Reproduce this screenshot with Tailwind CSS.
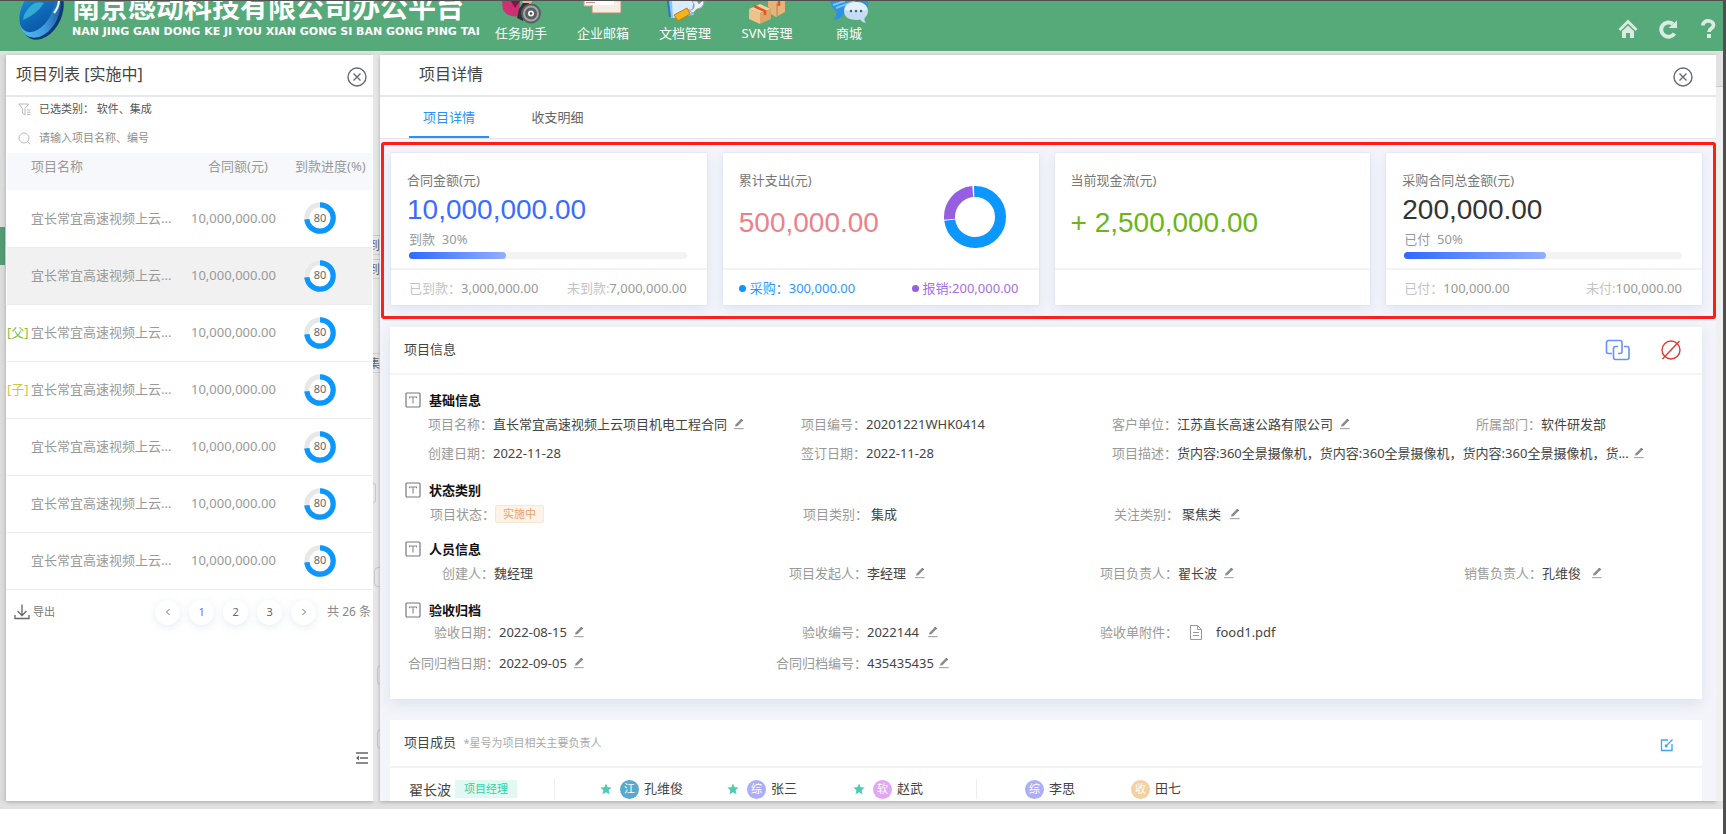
<!DOCTYPE html>
<html lang="zh-CN">
<head>
<meta charset="utf-8">
<title>项目详情</title>
<script src="https://cdn.jsdelivr.net/npm/@tailwindcss/browser@4"></script>
</head>
<body class="flex h-screen flex-col overflow-hidden border-t border-r-3 border-[#4f4f4f] bg-white font-['Noto_Sans','Noto_Sans_CJK_SC',sans-serif] text-[13px] text-[#444]">
<svg class="hidden" aria-hidden="true">
  <symbol id="pen" viewBox="0 0 12 12"><path d="M2 8.6 2.6 6.4 7.8 1.2 9.8 2.8 4.4 8.2Z" fill="#8c8c8c"/><path d="M7.8 1.2 9.8 2.8" stroke="#777" stroke-width="1.2"/><path d="M1 10.6h9.6" stroke="#aaa" stroke-width="1.2"/></symbol>
  <symbol id="tbox" viewBox="0 0 16 16"><rect x="1" y="1" width="14" height="14" rx="1" fill="none" stroke="#777" stroke-width="1.2"/><path d="M4.500 6.200V5h7v1.200M8 5v6.500" fill="none" stroke="#888" stroke-width="1.1"/></symbol>
  <symbol id="close" viewBox="0 0 20 20"><circle cx="10" cy="10" r="9" fill="none" stroke="#666a75" stroke-width="1.4"/><path d="m6.500 6.500 7 7m0-7-7 7" stroke="#666a75" stroke-width="1.4"/></symbol>
  <symbol id="star" viewBox="0 0 12 12"><path d="M6 .6 7.6 4.3 11.6 4.6 8.6 7.3 9.5 11.3 6 9.2 2.500 11.3 3.4 7.3.4 4.6 4.4 4.3Z" fill="#4ccbb0"/></symbol>
  <symbol id="ring" viewBox="0 0 32 32"><circle cx="16" cy="16" r="13.2" fill="none" stroke="#e8e8e8" stroke-width="5"/><circle cx="16" cy="16" r="13.2" fill="none" stroke="#0c97ff" stroke-width="5.2" pathLength="100" stroke-dasharray="73.5 100" transform="rotate(-90 16 16)"/></symbol>
</svg>

<header class="flex h-[50px] shrink-0 items-start justify-between overflow-hidden bg-[#56a978] text-white">
  <div class="flex items-start">
    <svg class="ml-[18px] h-10 w-[48px]" viewBox="0 0 48 40" aria-hidden="true">
      <defs><linearGradient id="g1" x1="0" y1="0" x2="1" y2="1"><stop offset="0" stop-color="#1aa0dc"/><stop offset=".5" stop-color="#0f6fbe"/><stop offset="1" stop-color="#0a4f9e"/></linearGradient>
      <linearGradient id="g2" x1="0" y1="1" x2="1" y2="0"><stop offset="0" stop-color="#5fc3ee"/><stop offset=".5" stop-color="#3d9fe0"/><stop offset="1" stop-color="#0b3f84"/></linearGradient></defs>
      <ellipse cx="24" cy="11" rx="20" ry="29" transform="rotate(24 24 11)" fill="#0c3a77"/>
      <ellipse cx="22" cy="10" rx="19" ry="28" transform="rotate(24 22 10)" fill="url(#g2)"/>
      <ellipse cx="19" cy="8" rx="15" ry="25" transform="rotate(28 19 8)" fill="url(#g1)"/>
      <path d="M6 14Q14-2 26 2 18 14 5 19Z" fill="#42c3dc" opacity=".7"/>
      <path d="M36 12Q41 6 41-2" stroke="#e5f5ff" stroke-width="2.200" fill="none"/>
    </svg>
    <div class="-mt-[11px] ml-[6px] w-[408px]">
      <h1 class="text-[28px] leading-[34px] font-bold whitespace-nowrap">南京感动科技有限公司办公平台</h1>
      <p class="font-['DejaVu_Sans'] text-[11px] leading-4 font-bold whitespace-nowrap">NAN JING GAN DONG KE JI YOU XIAN GONG SI BAN GONG PING TAI</p>
    </div>
    <nav class="flex">
      <a href="#" class="flex w-[82px] flex-col items-center"><svg class="h-[23px] w-[42px]" viewBox="0 0 42 23" aria-hidden="true"><path d="M2 0h18l-1 15Q8 17 3 9Z" fill="#cf2f73"/><path d="M11 0h9l-5 7Z" fill="#7d1747"/><path d="M22 0h10l-1 4h-7Z" fill="#f2b48c"/><path d="M19 8 23 2h6l-6 18-6-3Z" fill="#2f3336"/><circle cx="31" cy="12.500" r="10" fill="#5b5e61"/><circle cx="31" cy="12.500" r="7" fill="none" stroke="#a5a8aa" stroke-width="2"/><circle cx="31" cy="12.500" r="3" fill="#f4f4f4"/><circle cx="31" cy="12.500" r="1.200" fill="#444"/></svg><span class="leading-[18px]">任务助手</span></a>
      <a href="#" class="flex w-[82px] flex-col items-center"><svg class="h-[23px] w-[42px]" viewBox="0 0 42 23" aria-hidden="true"><path d="M2 0h33v5H2Z" fill="#fbf8f3" stroke="#c8a488"/><path d="M10 2v10h29V0" fill="#f5ece2" stroke="#b98f70"/><path d="M3 0h29v4H3Z" fill="#fff"/><path d="M4 1.500h9" stroke="#d88"/></svg><span class="leading-[18px]">企业邮箱</span></a>
      <a href="#" class="flex w-[82px] flex-col items-center"><svg class="h-[23px] w-[42px]" viewBox="0 0 42 23" aria-hidden="true"><path d="M4 0h24l2 14-23 3Z" fill="#8cc3f5"/><path d="M8 0h22l-3 12-18 5Z" fill="#d9ecfb"/><path d="M4 0l2 16" stroke="#2775c5" stroke-width="2"/><path d="M24 9Q31 10 30 3L28 0h5l2 3 3-3h2q0 7-7 8l-4 4Z" fill="#eef1f4" stroke="#98a4b0"/><path d="m10 14 13-7 3 6-12 7Z" fill="#f6b21c" stroke="#c47d08"/></svg><span class="leading-[18px]">文档管理</span></a>
      <a href="#" class="flex w-[82px] flex-col items-center"><svg class="h-[23px] w-[42px]" viewBox="0 0 42 23" aria-hidden="true"><path d="M3 8 14 3l11 5-11 4Z" fill="#f5cf9e"/><path d="M3 8v10l11 5V12Z" fill="#efc28b"/><path d="M14 12 25 8v10l-11 5Z" fill="#dda668"/><path d="M22 0h17v11l-9 5-5-3V8l-3-2Z" fill="#e6b47a"/><path d="M31 2v13" stroke="#b97f45"/><path d="m8 5 11 5v4M33 0v5" stroke="#e8541f" stroke-width="2.500" fill="none"/></svg><span class="leading-[18px]">SVN管理</span></a>
      <a href="#" class="flex w-[82px] flex-col items-center"><svg class="h-[23px] w-[42px]" viewBox="0 0 42 23" aria-hidden="true"><path d="M2 0h38v8L16 12Q14 18 5 19 10 14 8 10 3 6 2 0Z" fill="#2b92e6"/><path d="m5 4 12-4m-9 7L27 0" stroke="#7cc4f8" stroke-width="2"/><path d="M28 1C19 1 16 5 16 10s4 9 12 9q2 0 4-.5 2 3 6 3.500-2-2-1.500-5 3.500-3 3.500-7C40 5 36 1 28 1Z" fill="#c4dcf4"/><path d="M28 1C20 1 17 5 17 9q10 3 22 0C39 4 35 1 28 1Z" fill="#e4f0fb"/><circle cx="23" cy="10" r="1.300" fill="#44617f"/><circle cx="28" cy="10" r="1.300" fill="#44617f"/><circle cx="33" cy="10" r="1.300" fill="#44617f"/></svg><span class="leading-[18px]">商城</span></a>
    </nav>
  </div>
  <div class="flex gap-5 pt-[18px] pr-[5px]">
    <button aria-label="首页"><svg class="size-5" viewBox="0 0 20 20"><path d="m1.500 11 8.500-8.500 8.500 8.500" fill="none" stroke="#dcebe2" stroke-width="2.800"/><path d="M4 12.200 10 6.500l6 5.700V19h-4v-5H8v5H4Z" fill="#dcebe2"/></svg></button>
    <button aria-label="刷新"><svg class="size-5" viewBox="0 0 20 20"><path d="M16.500 14.500A7.200 7.200 0 1 1 15 5" fill="none" stroke="#dcebe2" stroke-width="4"/><path d="M10.500 9H19V1.500Z" fill="#dcebe2"/></svg></button>
    <button aria-label="帮助"><svg class="size-5" viewBox="0 0 20 20"><path d="M5 6.500C5 0 15.500 1 15.500 6c0 3.500-4.500 3.500-4.500 7" fill="none" stroke="#dcebe2" stroke-width="3.800"/><path d="M9 15h4v4H9Z" fill="#dcebe2"/></svg></button>
  </div>
</header>

<div class="mb-[25px] flex min-h-0 flex-1 bg-[#e1e1e1] pt-1 pb-2">
  <div class="w-[6px] shrink-0 bg-[#dcdcdc] pt-[172px]"><div class="h-[38px] w-[5px] bg-[#559c72]"></div></div>

  <aside class="flex w-[367px] shrink-0 flex-col bg-white shadow-[0_1px_4px_#0004]">
    <div class="flex h-[42px] shrink-0 items-center justify-between border-b-2 border-[#e6e8ef] pr-[6px] pl-[10px]">
      <h2 class="pb-[2px] text-[16px] text-[#444]">项目列表 [实施中]</h2>
      <button aria-label="关闭列表" class="mt-1"><svg class="size-5"><use href="#close"/></svg></button>
    </div>
    <button class="flex h-6 shrink-0 items-center gap-2 pl-[12px] text-left text-[11px] text-[#555]">
      <svg class="size-[13px]" viewBox="0 0 13 13" fill="none" stroke="#bbb"><path d="M.8 1h9.800L7 5.500V12L4.500 10V5.500ZM9 7h3.500M9 9.200h3.500M9 11.400h3.500"/></svg>
      <span>已选类别： 软件、集成</span>
    </button>
    <label class="mt-2 mb-[5px] flex h-[19px] shrink-0 items-center gap-2 pl-[12px]">
      <svg class="size-[13px] shrink-0" viewBox="0 0 13 13" fill="none" stroke="#bbb"><circle cx="6" cy="6" r="5"/><path d="m9.700 9.700 2.500 2.500"/></svg>
      <input aria-label="搜索项目" class="w-full text-[11px] outline-none placeholder:text-[#8f8f8f]" placeholder="请输入项目名称、编号">
    </label>
    <table class="mx-px table-fixed text-[13px] text-[#999]">
      <colgroup><col class="w-6"><col class="w-[160px]"><col class="w-[104px]"><col></colgroup>
      <thead><tr class="h-[37px] bg-[#f7f8fc] text-left align-top"><th></th><th class="pt-1 font-normal">项目名称</th><th class="pt-1 pl-[17px] font-normal">合同额(元)</th><th class="pt-1 font-normal whitespace-nowrap">到款进度(%)</th></tr></thead>
      <tbody>
        <tr class="h-[57px] border-b border-[#ececec]"><td></td><td>宜长常宜高速视频上云...</td><td>10,000,000.00</td><td class="pl-[9px]"><div class="grid size-8 place-items-center text-[11px] text-[#666]"><svg class="col-start-1 row-start-1 size-8"><use href="#ring"/></svg><span class="col-start-1 row-start-1">80</span></div></td></tr>
        <tr class="h-[57px] border-b border-[#ececec] bg-[#f1f1f1]"><td></td><td>宜长常宜高速视频上云...</td><td>10,000,000.00</td><td class="pl-[9px]"><div class="grid size-8 place-items-center rounded-full bg-white text-[11px] text-[#666]"><svg class="col-start-1 row-start-1 size-8"><use href="#ring"/></svg><span class="col-start-1 row-start-1">80</span></div></td></tr>
        <tr class="h-[57px] border-b border-[#ececec]"><td class="whitespace-nowrap text-[#7fc241]">[父]</td><td>宜长常宜高速视频上云...</td><td>10,000,000.00</td><td class="pl-[9px]"><div class="grid size-8 place-items-center text-[11px] text-[#666]"><svg class="col-start-1 row-start-1 size-8"><use href="#ring"/></svg><span class="col-start-1 row-start-1">80</span></div></td></tr>
        <tr class="h-[57px] border-b border-[#ececec]"><td class="whitespace-nowrap text-[#cfc63a]">[子]</td><td>宜长常宜高速视频上云...</td><td>10,000,000.00</td><td class="pl-[9px]"><div class="grid size-8 place-items-center text-[11px] text-[#666]"><svg class="col-start-1 row-start-1 size-8"><use href="#ring"/></svg><span class="col-start-1 row-start-1">80</span></div></td></tr>
        <tr class="h-[57px] border-b border-[#ececec]"><td></td><td>宜长常宜高速视频上云...</td><td>10,000,000.00</td><td class="pl-[9px]"><div class="grid size-8 place-items-center text-[11px] text-[#666]"><svg class="col-start-1 row-start-1 size-8"><use href="#ring"/></svg><span class="col-start-1 row-start-1">80</span></div></td></tr>
        <tr class="h-[57px] border-b border-[#ececec]"><td></td><td>宜长常宜高速视频上云...</td><td>10,000,000.00</td><td class="pl-[9px]"><div class="grid size-8 place-items-center text-[11px] text-[#666]"><svg class="col-start-1 row-start-1 size-8"><use href="#ring"/></svg><span class="col-start-1 row-start-1">80</span></div></td></tr>
        <tr class="h-[57px] border-b border-[#ececec]"><td></td><td>宜长常宜高速视频上云...</td><td>10,000,000.00</td><td class="pl-[9px]"><div class="grid size-8 place-items-center text-[11px] text-[#666]"><svg class="col-start-1 row-start-1 size-8"><use href="#ring"/></svg><span class="col-start-1 row-start-1">80</span></div></td></tr>
      </tbody>
    </table>
    <div class="mt-[10px] flex items-center justify-between pr-[2px] pl-2 text-[11px] text-[#777]">
      <button class="flex items-center gap-[3px]"><svg class="size-4" viewBox="0 0 16 16" fill="none" stroke="#666" stroke-width="1.300"><path d="M8 .5v11M3.500 7 8 11.500 12.500 7M1 11v3.500h14V11"/></svg>导出</button>
      <div class="flex items-center gap-[9px]">
        <button aria-label="上一页" class="grid size-[25px] place-items-center rounded-full shadow-[0_2px_8px_#a9bfd24d]"><svg class="size-2" viewBox="0 0 8 8" fill="none" stroke="#777"><path d="M5.500 1 2.500 4l3 3"/></svg></button>
        <button class="size-[25px] rounded-full text-[#6a6aff] shadow-[0_2px_8px_#a9bfd24d]">1</button>
        <button class="size-[25px] rounded-full text-[#666] shadow-[0_2px_8px_#a9bfd24d]">2</button>
        <button class="size-[25px] rounded-full text-[#666] shadow-[0_2px_8px_#a9bfd24d]">3</button>
        <button aria-label="下一页" class="grid size-[25px] place-items-center rounded-full shadow-[0_2px_8px_#a9bfd24d]"><svg class="size-2" viewBox="0 0 8 8" fill="none" stroke="#777"><path d="m2.500 1 3 3-3 3"/></svg></button>
        <span class="ml-[2px] text-[12px] text-[#888]">共 26 条</span>
      </div>
    </div>
    <button aria-label="收起" class="mt-auto mr-1 mb-[36px] self-end"><svg class="size-[14px]" viewBox="0 0 14 14" fill="none" stroke="#666" stroke-width="1.300"><path d="M1 2h12M5 7h8M1 12h12"/><path d="M4 4.500v5L1 7Z" fill="#666" stroke="none"/></svg></button>
  </aside>

  <div class="flex w-[7px] shrink-0 flex-col gap-1 overflow-hidden bg-[#e6e6e6] pt-[180px] text-[12px] leading-5 text-[#666]" aria-hidden="true">
    <span class="-ml-[5px] h-5 w-4 border-y border-[#ccc]">到</span><span class="-ml-[5px] h-5 w-4 border-y border-[#ccc]">到</span>
    <span class="mt-[70px] -ml-[5px] h-5 w-4 border-y border-[#ccc]">集</span>
    <span class="mt-[106px] h-5 w-[3px] rounded-r border border-l-0 border-[#c8c8c8]"></span>
    <span class="mt-[60px] ml-px h-5 w-4 rounded border border-[#c8c8c8]"></span>
    <span class="mt-[74px] ml-1 h-5 w-4 rounded border border-[#c8c8c8]"></span>
    <span class="mt-[40px] ml-1 h-5 w-4 rounded border border-[#c8c8c8]"></span>
  </div>

  <main class="flex min-w-0 flex-1 flex-col overflow-hidden bg-[#f4f5fa] shadow-[0_1px_4px_#0004]">
    <div class="flex h-[42px] shrink-0 items-center justify-between border-b-2 border-[#e6e8ef] bg-white pr-[23px] pl-[39px]">
      <h2 class="pb-[2px] text-[16px] text-[#444]">项目详情</h2>
      <button aria-label="关闭详情" class="mt-1"><svg class="size-5"><use href="#close"/></svg></button>
    </div>
    <div role="tablist" class="flex h-[42px] shrink-0 gap-[29px] border-b border-[#e4e5ea] bg-white pl-[29px]">
      <button role="tab" aria-selected="true" class="w-[80px] border-b-2 border-[#2492f7] pt-[2px] text-[#2492f7]">项目详情</button>
      <button role="tab" aria-selected="false" class="w-[79px] text-[#666]">收支明细</button>
    </div>

    <section class="mt-[3px] ml-px grid shrink-0 grid-cols-4 gap-4 rounded-[3px] border-3 border-[#ff1e14] pt-2 pr-[11px] pb-[11px] pl-[7px] text-[#999]">
      <article class="h-[152px] bg-white shadow-[0_4px_12px_#b9cbe566,0_0_1px_#b9cbe5]">
        <div class="flex h-[117px] flex-col border-b-2 border-[#f3f3f5] px-4 pt-[17px]">
          <h3 class="leading-5 text-[#777]">合同金额(元)</h3>
          <p class="font-['Liberation_Sans'] text-[28px] leading-[39px] text-[#3b6cff]">10,000,000.00</p>
          <p class="pl-[2px] leading-5 whitespace-pre">到款  30%</p>
          <div class="mt-[3px] mr-1 ml-[2px] h-[7px] rounded-full bg-[#f3f3f3]"><div class="h-full rounded-full bg-linear-to-r from-[#2e69ff] to-[#93aeff]" style="width:35%"></div></div>
        </div>
        <div class="flex h-[37px] items-center justify-between pr-5 pl-[18px]"><span><span class="text-[#c4c4c4]">已到款：</span>3,000,000.00</span><span><span class="text-[#c4c4c4]">未到款:</span>7,000,000.00</span></div>
      </article>
      <article class="h-[152px] bg-white shadow-[0_4px_12px_#b9cbe566,0_0_1px_#b9cbe5]">
        <div class="flex h-[117px] justify-between border-b-2 border-[#f3f3f5] pt-[17px] pr-[32px] pl-4">
          <div><h3 class="leading-5 text-[#777]">累计支出(元)</h3>
          <p class="mt-[14px] font-['Liberation_Sans'] text-[28px] leading-[38px] text-[#ef7f8a]">500,000.00</p></div>
          <svg class="mt-[15px] size-[64px]" viewBox="0 0 64 64" fill="none" stroke-width="11" aria-label="支出构成"><circle cx="32" cy="32" r="25.500" stroke="#0c97ff" pathLength="100" stroke-dasharray="73.500 100" transform="rotate(-92 32 32)"/><circle cx="32" cy="32" r="25.500" stroke="#965fe2" pathLength="100" stroke-dasharray="25 100" transform="rotate(175 32 32)"/></svg>
        </div>
        <div class="flex h-[37px] items-center justify-between pr-5 pl-4"><span class="flex items-center gap-1 text-[#2b98f5]"><i class="size-[7px] rounded-full bg-[#0c97ff]"></i>采购：300,000.00</span><span class="flex items-center gap-1 text-[#a36fe4]"><i class="size-[7px] rounded-full bg-[#965fe2]"></i>报销:200,000.00</span></div>
      </article>
      <article class="h-[152px] bg-white shadow-[0_4px_12px_#b9cbe566,0_0_1px_#b9cbe5]">
        <div class="h-[117px] border-b-2 border-[#f3f3f5] px-4 pt-[17px]">
          <h3 class="leading-5 text-[#777]">当前现金流(元)</h3>
          <p class="mt-[14px] font-['Liberation_Sans'] text-[28px] leading-[38px] text-[#6cb516]">+ 2,500,000.00</p>
        </div>
      </article>
      <article class="h-[152px] bg-white shadow-[0_4px_12px_#b9cbe566,0_0_1px_#b9cbe5]">
        <div class="flex h-[117px] flex-col border-b-2 border-[#f3f3f5] px-4 pt-[17px]">
          <h3 class="leading-5 text-[#777]">采购合同总金额(元)</h3>
          <p class="font-['Liberation_Sans'] text-[28px] leading-[39px] text-[#333]">200,000.00</p>
          <p class="pl-[2px] leading-5 whitespace-pre">已付  50%</p>
          <div class="mt-[3px] mr-1 ml-[2px] h-[7px] rounded-full bg-[#f3f3f3]"><div class="h-full rounded-full bg-linear-to-r from-[#2e69ff] to-[#93aeff]" style="width:51%"></div></div>
        </div>
        <div class="flex h-[37px] items-center justify-between pr-5 pl-[18px]"><span><span class="text-[#c4c4c4]">已付：</span>100,000.00</span><span><span class="text-[#c4c4c4]">未付:</span>100,000.00</span></div>
      </article>
    </section>

    <section class="mt-2 mr-[14px] ml-[10px] shrink-0 bg-white pb-6 shadow-[0_5px_14px_#b9c3dc66]">
      <div class="flex h-12 items-center justify-between border-b-2 border-[#f5f5f7] pr-[20px] pl-[14px]">
        <h3>项目信息</h3>
        <div class="flex gap-[29px]">
          <button aria-label="复制"><svg class="h-[22px] w-[26px]" viewBox="0 0 26 22" fill="none" stroke="#6492ff" stroke-width="1.600"><path d="M7 14.500H3.500a2 2 0 0 1-2-2v-9a2 2 0 0 1 2-2H15a2 2 0 0 1 2 2v9a2 2 0 0 1-2 2h-2"/><path d="M13 7.500h-2.500a2 2 0 0 0-2 2v9a2 2 0 0 0 2 2H22a2 2 0 0 0 2-2v-9a2 2 0 0 0-2-2h-3"/></svg></button>
          <button aria-label="停用"><svg class="size-[22px]" viewBox="0 0 22 22" fill="none" stroke="#e23b2e" stroke-width="1.400"><circle cx="11" cy="11" r="9"/><path d="M2.500 20 19.500 2"/></svg></button>
        </div>
      </div>
      <div class="pt-[13px] leading-6 whitespace-nowrap">
        <h4 class="flex h-6 items-center gap-2 pl-[15px] font-bold text-[#111]"><svg class="size-4"><use href="#tbox"/></svg>基础信息</h4>
        <dl class="grid grid-cols-[373fr_311fr_364fr_264fr] gap-y-[5px]">
          <div class="flex items-center"><dt class="w-[103px] text-right text-[#999]">项目名称：</dt><dd class="flex items-center gap-[6px]">直长常宜高速视频上云项目机电工程合同<button aria-label="编辑项目名称"><svg class="size-3"><use href="#pen"/></svg></button></dd></div>
          <div class="flex items-center"><dt class="w-[103px] text-right text-[#999]">项目编号：</dt><dd>20201221WHK0414</dd></div>
          <div class="flex items-center"><dt class="w-[103px] text-right text-[#999]">客户单位：</dt><dd class="flex items-center gap-[6px]">江苏直长高速公路有限公司<button aria-label="编辑客户单位"><svg class="size-3"><use href="#pen"/></svg></button></dd></div>
          <div class="flex items-center"><dt class="w-[103px] text-right text-[#999]">所属部门：</dt><dd>软件研发部</dd></div>
          <div class="flex items-center"><dt class="w-[103px] text-right text-[#999]">创建日期：</dt><dd>2022-11-28</dd></div>
          <div class="flex items-center"><dt class="w-[103px] text-right text-[#999]">签订日期：</dt><dd>2022-11-28</dd></div>
          <div class="col-span-2 flex items-center"><dt class="w-[103px] text-right text-[#999]">项目描述：</dt><dd class="flex items-center gap-1">货内容:360全景摄像机，货内容:360全景摄像机，货内容:360全景摄像机，货...<button aria-label="编辑项目描述"><svg class="size-3"><use href="#pen"/></svg></button></dd></div>
        </dl>
        <h4 class="mt-[13px] flex h-6 items-center gap-2 pl-[15px] font-bold text-[#111]"><svg class="size-4"><use href="#tbox"/></svg>状态类别</h4>
        <dl class="grid grid-cols-[373fr_311fr_364fr_264fr]">
          <div class="flex items-center"><dt class="w-[105px] text-right text-[#999]">项目状态：</dt><dd class="flex"><span class="h-[18px] rounded-xs border border-[#fce6d2] bg-[#fdf3e9] px-[7px] text-[11px] leading-4 text-[#eda35f]">实施中</span></dd></div>
          <div class="flex items-center gap-[3px]"><dt class="w-[105px] text-right text-[#999]">项目类别：</dt><dd>集成</dd></div>
          <div class="flex items-center gap-[3px]"><dt class="w-[105px] text-right text-[#999]">关注类别：</dt><dd class="flex items-center gap-2">聚焦类<button aria-label="编辑关注类别"><svg class="size-3"><use href="#pen"/></svg></button></dd></div>
        </dl>
        <h4 class="mt-[11px] flex h-6 items-center gap-2 pl-[15px] font-bold text-[#111]"><svg class="size-4"><use href="#tbox"/></svg>人员信息</h4>
        <dl class="grid grid-cols-[373fr_311fr_364fr_264fr]">
          <div class="flex items-center"><dt class="w-[104px] text-right text-[#999]">创建人：</dt><dd>魏经理</dd></div>
          <div class="flex items-center"><dt class="w-[104px] text-right text-[#999]">项目发起人：</dt><dd class="flex items-center gap-2">李经理<button aria-label="编辑项目发起人"><svg class="size-3"><use href="#pen"/></svg></button></dd></div>
          <div class="flex items-center"><dt class="w-[104px] text-right text-[#999]">项目负责人：</dt><dd class="flex items-center gap-[6px]">翟长波<button aria-label="编辑项目负责人"><svg class="size-3"><use href="#pen"/></svg></button></dd></div>
          <div class="flex items-center"><dt class="w-[104px] text-right text-[#999]">销售负责人：</dt><dd class="flex items-center gap-[10px]">孔维俊<button aria-label="编辑销售负责人"><svg class="size-3"><use href="#pen"/></svg></button></dd></div>
        </dl>
        <h4 class="mt-[13px] flex h-6 items-center gap-2 pl-[15px] font-bold text-[#111]"><svg class="size-4"><use href="#tbox"/></svg>验收归档</h4>
        <dl class="-mt-[2px] grid grid-cols-[373fr_311fr_364fr_264fr] gap-y-[7px]">
          <div class="flex items-center"><dt class="w-[109px] text-right text-[#999]">验收日期：</dt><dd class="flex items-center gap-[6px]">2022-08-15<button aria-label="编辑验收日期"><svg class="size-3"><use href="#pen"/></svg></button></dd></div>
          <div class="flex items-center"><dt class="w-[104px] text-right text-[#999]">验收编号：</dt><dd class="flex items-center gap-2">2022144<button aria-label="编辑验收编号"><svg class="size-3"><use href="#pen"/></svg></button></dd></div>
          <div class="flex items-center"><dt class="w-[104px] text-right text-[#999]">验收单附件：</dt><dd><a href="#" class="flex items-center gap-[14px] pl-3"><svg class="h-[15px] w-3" viewBox="0 0 12 15" fill="none" stroke="#999"><path d="M.5.500h7l4 4v10H.500ZM7.500.500v4h4M3 7.500h6M3 10.500h6"/></svg>food1.pdf</a></dd></div>
          <div></div>
          <div class="flex items-center"><dt class="w-[109px] text-right text-[#999]">合同归档日期：</dt><dd class="flex items-center gap-[6px]">2022-09-05<button aria-label="编辑合同归档日期"><svg class="size-3"><use href="#pen"/></svg></button></dd></div>
          <div class="flex items-center"><dt class="w-[104px] text-right text-[#999]">合同归档编号：</dt><dd class="flex items-center gap-1">435435435<button aria-label="编辑合同归档编号"><svg class="size-3"><use href="#pen"/></svg></button></dd></div>
        </dl>
      </div>
    </section>

    <section class="mt-[21px] mr-[14px] ml-[10px] shrink-0 bg-white">
      <div class="flex h-[48px] items-center justify-between border-b-2 border-[#f3f3f6] pr-7 pl-[14px]">
        <h3>项目成员 <small class="ml-1 text-[11px] text-[#aaa]">*星号为项目相关主要负责人</small></h3>
        <button aria-label="编辑成员"><svg class="mt-1 size-[14px]" viewBox="0 0 14 14" fill="none" stroke="#3ba5f3" stroke-width="1.300"><path d="M8 2H1.500v10.500H12V6M6 8l6.500-6.500M5.500 6.500v2h2"/></svg></button>
      </div>
      <ul class="flex h-[42px] items-center text-[13px] whitespace-nowrap">
        <li class="flex w-[165px] items-center gap-1 border-r border-[#eee] pl-[19px] text-[14px]">翟长波<span class="bg-[#e2f9f3] px-[9px] text-[11px] leading-[18px] text-[#2fd3a6]">项目经理</span></li>
        <li class="flex w-[127px] items-center gap-[5px] pl-[45px]"><svg class="size-3 shrink-0"><use href="#star"/></svg><span class="ml-[3px] size-[19px] shrink-0 rounded-full bg-[#59a9cf] text-center text-[11px] leading-[18px] text-white">江</span>孔维俊</li>
        <li class="flex w-[126px] items-center gap-[5px] pl-[45px]"><svg class="size-3 shrink-0"><use href="#star"/></svg><span class="ml-[3px] size-[19px] shrink-0 rounded-full bg-[#acaef8] text-center text-[11px] leading-[18px] text-white">综</span>张三</li>
        <li class="flex w-[169px] items-center gap-[5px] border-r border-[#eee] pl-[45px]"><svg class="size-3 shrink-0"><use href="#star"/></svg><span class="ml-[3px] size-[19px] shrink-0 rounded-full bg-[#e3a5f6] text-center text-[11px] leading-[18px] text-white">软</span>赵武</li>
        <li class="flex w-[106px] items-center gap-[5px] pl-[48px]"><span class="size-[19px] shrink-0 rounded-full bg-[#acaef8] text-center text-[11px] leading-[18px] text-white">综</span>李思</li>
        <li class="flex items-center gap-[5px] pl-[48px]"><span class="size-[19px] shrink-0 rounded-full bg-[#f4d0a2] text-center text-[11px] leading-[18px] text-white">收</span>田七</li>
      </ul>
    </section>
  </main>
  <div class="w-[7px] shrink-0 bg-[#f0f0f0]"><div class="h-8 border-b border-[#ccc] bg-[#e2e2e2]"></div></div>
</div>
</body>
</html>
